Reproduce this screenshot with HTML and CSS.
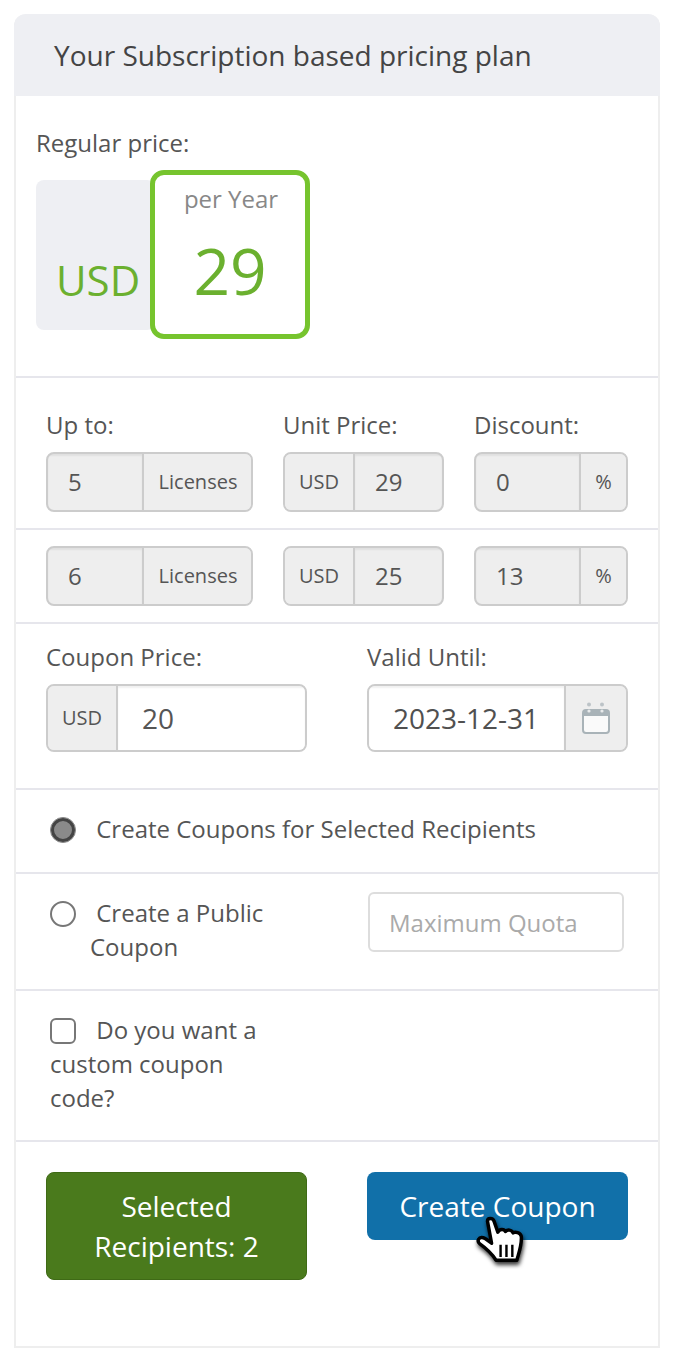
FILE: index.html
```html
<!DOCTYPE html>
<html lang="en">
<head>
<meta charset="utf-8">
<title>Subscription pricing plan</title>
<link rel="stylesheet" href="styles.css">
</head>
<body>
<section class="card">
  <h2 class="card-head">Your Subscription based pricing plan</h2>

  <div class="row row-regular">
    <div class="label">Regular price:</div>
    <div class="price">
      <div class="price-cur">USD</div>
      <div class="price-box">
        <div class="price-per">per Year</div>
        <div class="price-num">29</div>
      </div>
    </div>
  </div>

  <div class="row row-tier-first tiers">
    <div>
      <div class="label label-field">Up to:</div>
      <div class="group"><span class="field grow">5</span><span class="addon addon-wide">Licenses</span></div>
    </div>
    <div>
      <div class="label label-field">Unit Price:</div>
      <div class="group"><span class="addon addon-usd">USD</span><span class="field grow">29</span></div>
    </div>
    <div>
      <div class="label label-field">Discount:</div>
      <div class="group"><span class="field grow">0</span><span class="addon addon-pct">%</span></div>
    </div>
  </div>

  <div class="row row-tier tiers">
    <div class="group"><span class="field grow">6</span><span class="addon addon-wide">Licenses</span></div>
    <div class="group"><span class="addon addon-usd">USD</span><span class="field grow">25</span></div>
    <div class="group"><span class="field grow">13</span><span class="addon addon-pct">%</span></div>
  </div>

  <div class="row row-coupon two-col">
    <div>
      <div class="label label-field">Coupon Price:</div>
      <div class="group group-tall"><span class="addon addon-coupon">USD</span><span class="field field-white field-price grow">20</span></div>
    </div>
    <div>
      <div class="label label-field">Valid Until:</div>
      <div class="group group-tall"><span class="field field-white field-date grow">2023-12-31</span><span class="addon addon-cal">
        <svg class="cal-icon" viewBox="0 0 28 32" aria-hidden="true">
          <circle cx="7" cy="2.5" r="2" fill="#bcc3c7"/>
          <circle cx="20" cy="2.5" r="2" fill="#bcc3c7"/>
          <rect x="1" y="8" width="26" height="23" rx="3" fill="#fafafa" stroke="#a9b3b8" stroke-width="2"/>
          <path d="M1 11a3 3 0 0 1 3-3h20a3 3 0 0 1 3 3v3H1z" fill="#a9b3b8"/>
          <circle cx="7" cy="9" r="1.6" fill="#e8eaeb"/>
          <circle cx="20" cy="9" r="1.6" fill="#e8eaeb"/>
        </svg>
      </span></div>
    </div>
  </div>

  <div class="row row-radio">
    <span class="radio radio-on"></span> Create Coupons for Selected Recipients
  </div>

  <div class="row row-public">
    <div class="public-label"><span class="radio"></span> Create a Public Coupon</div>
    <div class="quota">Maximum Quota</div>
  </div>

  <div class="row row-check">
    <div class="check-label"><span class="check"></span> Do you want a custom coupon code?</div>
  </div>

  <div class="row row-actions two-col">
    <div class="btn btn-green">Selected Recipients: 2</div>
    <div class="btn-wrap">
      <div class="btn btn-blue">Create Coupon</div>
      <svg class="cursor" viewBox="0 0 150 165" aria-hidden="true">
        <path d="M30 12C30 2 46 2 49 12L60 44C65 34 78 34 82 42C88 36 100 36 104 46C110 42 126 44 128 56C130 80 122 100 115 125H55C45 110 25 90 8 78C-2 70 5 56 18 60C25 62 35 70 42 76Z" fill="#fff" stroke="#000" stroke-width="10" stroke-linejoin="round"/>
        <path d="M68 80V116M85 80V116M102 80V116" stroke="#000" stroke-width="7" fill="none"/>
      </svg>
    </div>
  </div>
</section>
</body>
</html>
```
FILE: styles.css
```css
* { box-sizing: border-box; }

html, body { margin: 0; padding: 0; background: #fff; }

body {
  font-family: "Open Sans", "Liberation Sans", sans-serif;
  font-size: 24px;
  line-height: 34px;
  color: #555;
  padding: 14px;
}

.card {
  width: 646px;
  height: 1334px;
  border: 2px solid #eee;
  border-top: 0;
  border-radius: 12px 12px 0 0;
  overflow: visible;
}

.card-head {
  margin: 0 -2px;
  height: 82px;
  display: flex;
  align-items: center;
  padding-left: 40px;
  background: #eeeff3;
  border-radius: 12px 12px 0 0;
  font-size: 28px;
  font-weight: 400;
  color: #444;
}

.row { border-bottom: 2px solid #e6e6ec; }

.label { height: 32px; line-height: 30px; }
.label-field { margin-bottom: 10px; }

.row-regular { height: 282px; padding: 32px 20px 0; }

.price { display: flex; margin-top: 10px; align-items: flex-start; }

.price-cur {
  width: 119px;
  height: 150px;
  margin-top: 10px;
  padding: 0 0 20px 20px;
  display: flex;
  align-items: flex-end;
  background: #eeeff3;
  border-radius: 8px;
  color: #6bb02f;
  font-size: 42px;
  line-height: 60px;
}

.price-box {
  width: 160px;
  height: 169px;
  margin-left: -5px;
  position: relative;
  background: #fff;
  border: 5px solid #76c42e;
  border-radius: 14px;
  text-align: center;
}

.price-per { margin-top: 7px; padding-left: 2px; color: #888; line-height: 34px; }

.price-num {
  margin-top: 13px;
  color: #6bb02f;
  font-size: 64px;
  line-height: 84px;
}

.tiers {
  display: grid;
  grid-template-columns: 207px 161px 154px;
  column-gap: 30px;
  padding-left: 30px;
  padding-right: 30px;
}

.row-tier-first { height: 152px; padding-top: 32px; }
.row-tier { height: 94px; padding-top: 16px; }

.two-col {
  display: grid;
  grid-template-columns: 261px 261px;
  column-gap: 60px;
  padding-left: 30px;
  padding-right: 30px;
}

.row-coupon { height: 166px; padding-top: 18px; }

.group {
  display: flex;
  height: 60px;
  border: 2px solid #ccc;
  border-radius: 8px;
  background: #eee;
  overflow: hidden;
}

.group-tall { height: 68px; }

.field {
  display: flex;
  align-items: center;
  padding-left: 20px;
  box-shadow: inset 0 2px 2px rgba(0, 0, 0, 0.06);
}

.grow { flex: 1; min-width: 0; }

.field-white { background: #fff; font-size: 28px; }
.field-price { padding-left: 24px; }
.field-date { padding-left: 24px; white-space: nowrap; color: #505050; }

.addon {
  display: flex;
  align-items: center;
  justify-content: center;
  font-size: 20px;
  background: #eee;
}

.addon-wide { width: 109px; padding-left: 1px; border-left: 2px solid #ccc; }
.addon-usd { width: 70px; border-right: 2px solid #ccc; }
.addon-pct { width: 47px; border-left: 2px solid #ccc; }
.addon-coupon { width: 70px; border-right: 2px solid #ccc; }
.addon-cal { width: 62px; border-left: 2px solid #ccc; }

.cal-icon { width: 28px; height: 32px; filter: blur(0.4px); }

.radio, .check {
  display: inline-block;
  width: 26px;
  height: 26px;
  margin-right: 14px;
  vertical-align: -5px;
  border: 2px solid #777;
  background: #fff;
}

.radio { border-radius: 50%; }
.check { border-radius: 6px; }

.radio-on {
  background: #8a8a8a;
  border: 1px solid #888;
  box-shadow: inset 0 0 0 3px #444;
}

.row-radio { height: 84px; padding: 22px 0 0 34px; }

.row-public {
  height: 117px;
  padding: 18px 34px 0 34px;
  display: flex;
  justify-content: space-between;
  align-items: flex-start;
}

.public-label {
  width: 260px;
  margin-top: 4px;
  padding-left: 40px;
  text-indent: -40px;
}

.public-label .radio { text-indent: 0; }

.quota {
  width: 256px;
  height: 60px;
  padding: 2px 0 0 19px;
  display: flex;
  align-items: center;
  border: 2px solid #ddd;
  border-radius: 6px;
  color: #aaa;
}

.row-check { height: 151px; padding: 22px 0 0 34px; }

.check-label { width: 240px; }

.row-actions {
  border-bottom: 0;
  padding-top: 30px;
  align-items: start;
}

.btn {
  padding: 14px 10px;
  border-radius: 8px;
  color: #fff;
  font-size: 28px;
  line-height: 40px;
  text-align: center;
}

.btn-green { background: #4a7a1c; border: 1px solid #3f6a16; padding: 13px 9px; }
.btn-blue { background: #1170a9; }

.btn-wrap { position: relative; }

.cursor {
  position: absolute;
  left: 110px;
  top: 45px;
  width: 52px;
  height: 57px;
  overflow: visible;
  filter: drop-shadow(1px 3px 2px rgba(0, 0, 0, 0.8));
}
```
